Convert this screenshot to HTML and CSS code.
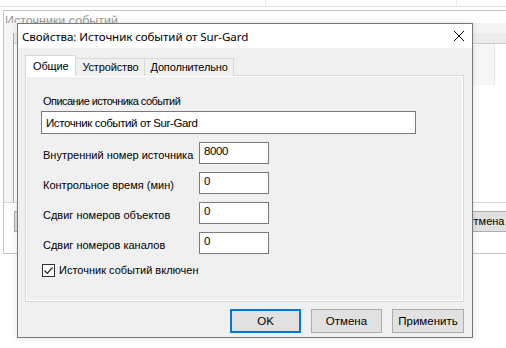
FILE: index.html
```html
<!DOCTYPE html>
<html>
<head>
<meta charset="utf-8">
<link rel="stylesheet" href="styles.css">
</head>
<body>
<div class="desk">
  <div class="strip"><span class="sep s1"></span><span class="sep s2"></span></div>

  <div class="bgwin">
    <div class="bgtitle"><span>Источники событий</span></div>
    <div class="bglist">
      <div class="bghead"></div>
      <div class="bgrow"></div>
    </div>
    <div class="bgbar">
      <span class="bgbtn bgleft"></span>
      <span class="bgbtn bgcancel">Отмена</span>
    </div>
  </div>

  <div class="dlg">
    <div class="titlebar">
      <span class="title">Свойства: Источник событий от Sur-Gard</span>
      <svg class="close" width="12" height="12" viewBox="0 0 12 12"><path d="M1 1 L11 11 M11 1 L1 11" stroke="#000" stroke-width="1" fill="none"/></svg>
    </div>
    <div class="body">
      <div class="tabs">
        <span class="tab active">Общие</span>
        <span class="tab">Устройство</span>
        <span class="tab">Дополнительно</span>
      </div>
      <div class="panel">
        <div class="lbl desc-lbl">Описание источника событий</div>
        <div class="field wide">Источник событий от Sur-Gard</div>
        <div class="grid">
          <span class="lbl">Внутренний номер источника</span><span class="field small">8000</span>
          <span class="lbl">Контрольное время (мин)</span><span class="field small">0</span>
          <span class="lbl">Сдвиг номеров объектов</span><span class="field small">0</span>
          <span class="lbl">Сдвиг номеров каналов</span><span class="field small">0</span>
        </div>
        <div class="check">
          <span class="box"><svg width="11" height="11" viewBox="0 0 11 11"><path d="M1.5 5.5 L4.3 8.4 L9.6 2.4" stroke="#222" stroke-width="1.3" fill="none"/></svg></span>
          <span class="lbl">Источник событий включен</span>
        </div>
      </div>
      <div class="buttons">
        <span class="btn default">OK</span>
        <span class="btn">Отмена</span>
        <span class="btn">Применить</span>
      </div>
    </div>
  </div>
</div>
</body>
</html>
```
FILE: styles.css
```css
html, body {
  margin: 0;
  padding: 0;
  background: #fff;
}
.desk {
  position: relative;
  width: 506px;
  height: 348px;
  overflow: hidden;
  font-family: "Liberation Sans", Arial, sans-serif;
  font-size: 11px;
  color: #000;
}
.strip {
  position: absolute;
  left: 0;
  top: 0;
  width: 506px;
  height: 6px;
  border-bottom: 1px solid #e2e2e2;
}
.sep {
  position: absolute;
  top: 0;
  width: 1px;
  height: 6px;
  background: #ebebeb;
}
.s1 { left: 265px; }
.s2 { left: 456px; }

.bgwin {
  position: absolute;
  left: 3px;
  top: 10px;
  width: 560px;
  height: 242px;
  border: 1px solid #c4c4c4;
  background: #f4f4f4;
  display: flex;
  flex-direction: column;
}
.bgtitle {
  height: 12px;
  overflow: hidden;
  padding-left: 1px;
  font-size: 12.5px;
  color: #9a9a9a;
  background: #fff;
  flex-shrink: 0;
}
.bgtitle span {
  display: block;
  line-height: 20px;
}
.bglist {
  margin-top: 10px;
  margin-left: 9px;
  height: 169px;
  border-left: 1px solid #a8a8a8;
  border-right: 1px solid #a8a8a8;
  background: #fff;
  display: flex;
  flex-direction: column;
  flex-shrink: 0;
}
.bghead {
  height: 10px;
  background: #ececec;
  border-bottom: 1px solid #d0d0d0;
}
.bgrow {
  margin-left: 459px;
  width: 21px;
  height: 41px;
  background: #f6f6f6;
  border-right: 1px solid #e6e6e6;
}
.bgbar {
  flex: 1;
  border-top: 1px solid #d6d6d6;
  background: #fff;
  position: relative;
}
.bgbtn {
  position: absolute;
  top: 8px;
  height: 19px;
  background: #e1e1e1;
  border: 1px solid #adadad;
  line-height: 19px;
  font-size: 11px;
}
.bgleft {
  left: 10px;
  width: 60px;
}
.bgcancel {
  left: 455px;
  width: 60px;
  padding-left: 5px;
}

.dlg {
  position: absolute;
  left: 17px;
  top: 23px;
  width: 454px;
  height: 313px;
  border: 1px solid #777;
  background: #f0f0f0;
  display: flex;
  flex-direction: column;
  box-shadow: 0 0 6px rgba(0,0,0,0.12);
}
.titlebar {
  height: 24px;
  flex-shrink: 0;
  background: #fff;
  display: flex;
  align-items: center;
  padding-left: 4px;
  position: relative;
}
.title {
  font-family: "Noto Sans", "Open Sans", sans-serif;
  font-size: 11.6px;
  padding-top: 1px;
  letter-spacing: -0.1px;
}
.close {
  position: absolute;
  left: 435px;
  top: 6px;
}
.body {
  flex: 1;
  padding: 7px 8px 0 7px;
  display: flex;
  flex-direction: column;
}
.tabs {
  display: flex;
  align-items: flex-end;
  height: 21px;
  flex-shrink: 0;
  margin-bottom: -1px;
  position: relative;
  z-index: 1;
  font-size: 11px;
  letter-spacing: -0.15px;
}
.tab {
  height: 18px;
  line-height: 17px;
  padding: 0 5px;
  border: 1px solid #d9d9d9;
  border-bottom: none;
  background: #f0f0f0;
  margin-left: -1px;
  box-sizing: border-box;
}
.tab:nth-child(2) { padding: 0 6px; }
.tab.active {
  height: 21px;
  line-height: 20px;
  background: #fff;
  margin-left: 0;
  padding: 0 7px;
  position: relative;
  z-index: 2;
}
.panel {
  box-sizing: border-box;
  height: 227px;
  flex-shrink: 0;
  border: 1px solid #d9d9d9;
  box-shadow: inset 1px 1px 0 #fff, inset -1px -1px 0 #fff;
  background: #f0f0f0;
  padding: 18px 0 0 15px;
  display: flex;
  flex-direction: column;
}
.lbl {
  line-height: 14px;
  white-space: nowrap;
}
.desc-lbl {
  margin-left: 2px;
  letter-spacing: -0.55px;
}
.field {
  box-sizing: border-box;
  background: #fff;
  border: 1px solid #7a7a7a;
  padding: 0 4px;
  line-height: 14px;
  font-size: 11.5px;
  letter-spacing: -0.4px;
}
.wide {
  margin-top: 3px;
  width: 375px;
  height: 23px;
  padding-top: 4px;
}
.grid {
  margin-top: 8px;
  display: grid;
  grid-template-columns: 158px 70px;
  row-gap: 8px;
  align-items: center;
}
.grid .lbl {
  padding-left: 2px;
  padding-top: 4px;
}
.small {
  height: 22px;
  padding-top: 1px;
}
.check {
  margin-top: 9px;
  margin-left: 1px;
  display: flex;
  align-items: center;
  gap: 4px;
}
.box {
  box-sizing: border-box;
  width: 13px;
  height: 13px;
  border: 1px solid #333;
  background: #fff;
  display: flex;
  align-items: center;
  justify-content: center;
}
.buttons {
  margin-top: 7px;
  display: flex;
  justify-content: flex-end;
  gap: 10px;
}
.btn {
  box-sizing: border-box;
  width: 71px;
  height: 24px;
  flex-shrink: 0;
  border: 1px solid #adadad;
  background: #e1e1e1;
  display: flex;
  align-items: center;
  justify-content: center;
  font-size: 11.5px;
}
.btn:last-child { width: 72px; }
.btn.default {
  border: 2px solid #0078d7;
}
```
